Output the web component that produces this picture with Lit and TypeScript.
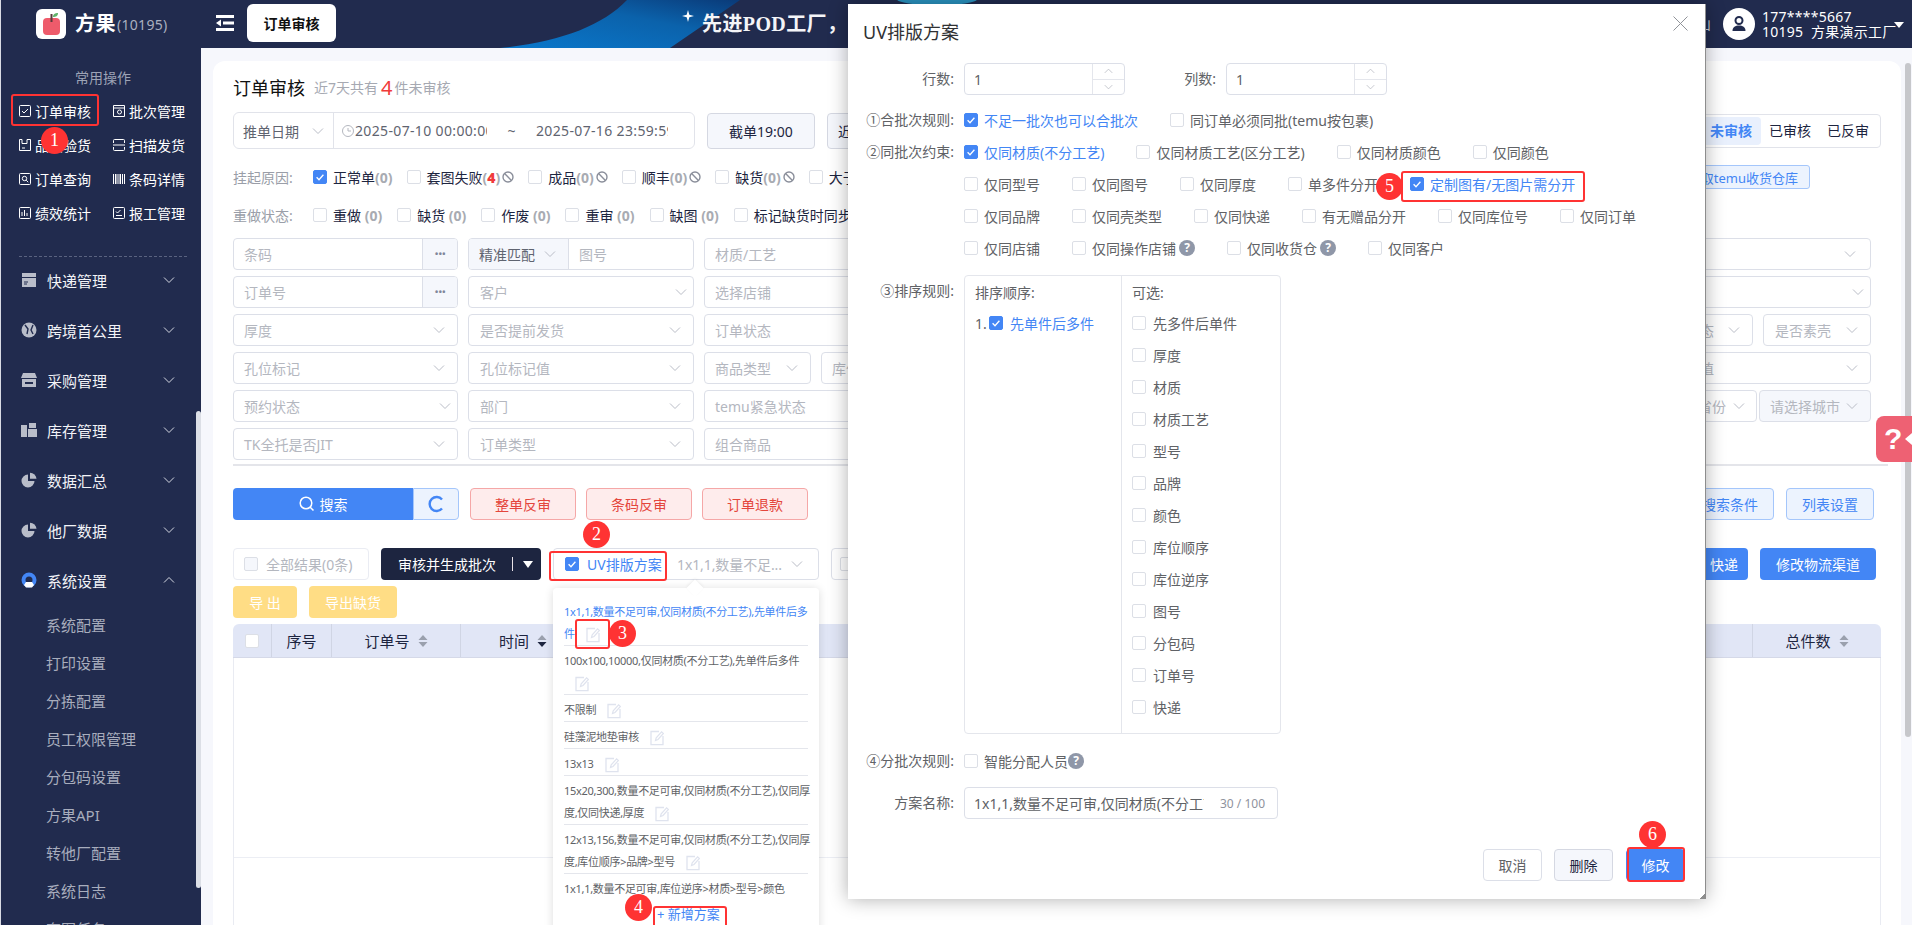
import { LitElement, html, css, svg } from "lit";
import { customElement } from "lit/decorators.js";

const check = html`<svg viewBox="0 0 14 14" width="14" height="14"><path d="M3.6 7.2l2.4 2.5 4.4-5" fill="none" stroke="#fff" stroke-width="1.3"/></svg>`;
const cb = (on = false) => html`<span class="cb ${on ? "on" : ""}">${on ? check : ""}</span>`;
const chev = (cls = "") => html`<svg class="chev ${cls}" viewBox="0 0 12 8" width="12" height="8"><path d="M1 1.5l5 5 5-5" fill="none" stroke="currentColor" stroke-width="1"/></svg>`;
const ban = html`<svg class="ban" viewBox="0 0 12 12" width="12" height="12"><circle cx="6" cy="6" r="5" fill="none" stroke="#8b8f9b" stroke-width="1.4"/><path d="M2.6 2.6l6.8 6.8" stroke="#8b8f9b" stroke-width="1.4"/></svg>`;
const q = html`<span class="q">?</span>`;
const edit = html`<svg class="edit" viewBox="0 0 14 16" width="14" height="16"><path d="M9 1.5H1v13.2h12V6" fill="none" stroke="#dfe3ee" stroke-width="1.3"/><path d="M5.5 10.5l.7-2.6 5.4-6 1.8 1.6-5.4 6z" fill="none" stroke="#dfe3ee" stroke-width="1.2"/></svg>`;
const sort = (down = false) => html`<svg class="sort" viewBox="0 0 10 14" width="10" height="14"><path d="M5 1l4.5 5H.5z" fill="#9aa0ad"/><path d="M5 13L.5 8h9z" fill="${down ? "#1d2540" : "#9aa0ad"}"/></svg>`;

const qi = (body: unknown) => html`<svg class="qi" viewBox="0 0 12 12" width="12" height="12" fill="none" stroke="#fff" stroke-width="1">${body}</svg>`;
const quick = [
  ["订单审核", qi(svg`<rect x=".5" y=".5" width="11" height="11" rx="1"/><path d="M3 6l2 2 4-4"/>`)],
  ["批次管理", qi(svg`<path d="M.5.5h11v11H.5z"/><path d="M.5 3h11"/><circle cx="6.5" cy="7" r="2"/>`)],
  ["品质验货", qi(svg`<path d="M3 .5H.5v11h11V.5H8v4H3z" /><path d="M3 9h3"/>`)],
  ["扫描发货", qi(svg`<path d="M.5 4V1.500q0-1 1-1h9q1 0 1 1V4M.5 8v2.500q0 1 1 1h9q1 0 1-1V8M0 6h12"/>`)],
  ["订单查询", qi(svg`<rect x=".5" y=".5" width="11" height="11" rx="1"/><circle cx="5.500" cy="5.500" r="2.200"/><path d="M7.200 7.200l2 2"/>`)],
  ["条码详情", qi(svg`<path d="M.5 1v10M2.500 1v10M4 1v10M6 1v10M7.500 1v10M9.500 1v10M11.500 1v10"/>`)],
  ["绩效统计", qi(svg`<rect x=".5" y=".5" width="11" height="11" rx="1"/><path d="M3 9V5M5.500 9V3M8 9V6"/>`)],
  ["报工管理", qi(svg`<rect x=".5" y=".5" width="11" height="11" rx="1"/><path d="M3 4.500l1.500 1.500 3-3M3 8.500h6"/>`)],
];
const mi = (body: unknown, color = "#b9bdc9") => html`<svg class="mi" viewBox="0 0 16 16" width="16" height="16" fill="${color}">${body}</svg>`;
const pie = svg`<path d="M7 2.500a6.500 6.500 0 1 0 6.500 6.500H7z"/><path d="M9 .8v6h6.500A6.500 6.500 0 0 0 9 .8z"/>`;
const menu = [
  ["快递管理", mi(svg`<path d="M1 1h14v4H1z"/><path d="M1 6h14v9H1z"/><path d="M3 10h4M3 12h3" stroke="#212b4e" stroke-width="1"/>`)],
  ["跨境首公里", mi(svg`<circle cx="8" cy="8" r="7.500"/><path d="M4 3l3 4-1 5M12 3l-2 5 2 4" stroke="#212b4e" stroke-width="1.400" fill="none"/>`)],
  ["采购管理", mi(svg`<path d="M2 1h12l2 5H0z"/><path d="M1 7h14v8H1z"/><path d="M4 10h8v2H4z" fill="#212b4e"/>`)],
  ["库存管理", mi(svg`<path d="M0 3h6v12H0zM7 7h9v8H7zM8 1h7v5H8z"/>`)],
  ["数据汇总", mi(pie)],
  ["他厂数据", mi(pie)],
];
const subs = ["系统配置", "打印设置", "分拣配置", "员工权限管理", "分包码设置", "方果API", "转他厂配置", "系统日志", "套图任务"];

type F = { t: string; w: number; cr?: number; pad?: number; dis?: boolean };
const field = (f: F) => html`<div class="field ${f.dis ? "dis" : ""}" style="width:${f.w}px;padding-left:${f.pad ?? 10}px;padding-right:${(f.cr ?? 18) - 6}px"><span class="ph">${f.t}</span>${chev()}</div>`;
const plain = (t: string, w: number) => html`<div class="field" style="width:${w}px"><span class="ph">${t}</span></div>`;
const more = (t: string) => html`<div class="field addon w1"><span class="ph grow">${t}</span><span class="dots">•••</span></div>`;

const formRows = [
  {
    left: html`${more("条码")}<div class="field prefix w2"><span class="pre"><span>精准匹配</span>${chev()}</span><span class="ph">图号</span></div>${plain("材质/工艺", 225)}`,
    right: [{ t: "", w: 200, cr: 20 }],
  },
  {
    left: html`${more("订单号")}${field({ t: "客户", w: 226, cr: 12, pad: 11 })}${plain("选择店铺", 225)}`,
    right: [{ t: "", w: 200, cr: 12 }],
  },
  {
    left: html`${field({ t: "厚度", w: 225 })}${field({ t: "是否提前发货", w: 226, pad: 11 })}${plain("订单状态", 225)}`,
    right: [{ t: "订单状态", w: 153, pad: 57 }, { t: "是否素壳", w: 108, pad: 11 }],
  },
  {
    left: html`${field({ t: "孔位标记", w: 225 })}${field({ t: "孔位标记值", w: 226, pad: 11 })}${field({ t: "商品类型", w: 107 })}${plain("库位", 110)}`,
    right: [{ t: "标记值", w: 260, pad: 60 }],
  },
  {
    left: html`${field({ t: "预约状态", w: 225, cr: 12 })}${field({ t: "部门", w: 226, pad: 11 })}${plain("temu紧急状态", 225)}`,
    right: [{ t: "选择省份", w: 160, pad: 72, cr: 17 }, { t: "请选择城市", w: 112, dis: true, cr: 18 }],
  },
  {
    left: html`${field({ t: "TK全托是否JIT", w: 225 })}${field({ t: "订单类型", w: 226, pad: 11 })}${plain("组合商品", 225)}`,
    right: [],
  },
];

const schemes = [
  ["1x1,1,数量不足可审,仅同材质(不分工艺),先单件后多", "件"],
  ["100x100,10000,仅同材质(不分工艺),先单件后多件", ""],
  ["不限制"],
  ["硅藻泥地垫审核"],
  ["13x13"],
  ["15x20,300,数量不足可审,仅同材质(不分工艺),仅同厚", "度,仅同快递,厚度"],
  ["12x13,156,数量不足可审,仅同材质(不分工艺),仅同厚", "度,库位顺序>品牌>型号"],
];

const optRows: [string, boolean, boolean?][][] = [
  [["仅同材质(不分工艺)", true], ["仅同材质工艺(区分工艺)", false], ["仅同材质颜色", false], ["仅同颜色", false]],
  [["仅同型号", false], ["仅同图号", false], ["仅同厚度", false], ["单多件分开", false], ["定制图有/无图片需分开", true]],
  [["仅同品牌", false], ["仅同壳类型", false], ["仅同快递", false], ["有无赠品分开", false], ["仅同库位号", false], ["仅同订单", false]],
  [["仅同店铺", false], ["仅同操作店铺", false, true], ["仅同收货仓", false, true], ["仅同客户", false]],
];
const sortOpts = ["先多件后单件", "厚度", "材质", "材质工艺", "型号", "品牌", "颜色", "库位顺序", "库位逆序", "图号", "分包码", "订单号", "快递"];

const stepper = html`<span class="stepper"><span>${chev("up")}</span><span>${chev()}</span></span>`;

@customElement("app-root")
export class AppRoot extends LitElement {
  static styles = css`
    :host { display: block; width: 1912px; height: 925px; position: relative; overflow: hidden; background: #f6f7fc;
      font-family: "Noto Sans", "Noto Sans CJK SC", sans-serif; font-size: 14px; color: #1d2540; }
    * { box-sizing: border-box; }
    svg { flex: none; display: block; }
    .app { display: flex; height: 925px; }

    .side { width: 201px; flex: none; background: #212b4e; border-left: 1px solid #d9dbe4; position: relative; height: 925px; overflow: hidden; color: #fff; }
    .logo { height: 48px; display: flex; align-items: center; padding-left: 35px; }
    .logo b { font-size: 20px; margin: 0 1px 0 9px; line-height: 24px; letter-spacing: .5px; }
    .logo span { color: #aab0c0; font-size: 14px; letter-spacing: .3px; }
    .sec { padding: 20px 0 0 74px; height: 46px; line-height: 20px; color: #9da3b6; }
    .qgrid { display: grid; grid-template-columns: 94px 94px; grid-auto-rows: 34px; padding-left: 18px; }
    .qgrid div { display: flex; align-items: center; gap: 4px; }
    .dash { margin: 26px 14px 0 18px; border-top: 1px dashed #5a6380; height: 0; }
    .menu { margin-top: -2px; }
    .mitem { height: 50px; display: flex; align-items: center; padding: 0 26px 0 20px; font-size: 15px; color: #f2f3f7; }
    .mitem .mi { margin-right: 10px; }
    .mitem .chev { margin-left: auto; color: #d5d8e2; }
    .chev.up { transform: rotate(180deg); }
    .subs { padding-top: 1px; }
    .sub { height: 38px; line-height: 38px; padding-left: 45px; font-size: 15px; color: #a8adbd; }
    .sbar { position: absolute; left: 195px; top: 411px; width: 5px; height: 477px; background: #dcdfe6; border-radius: 3px; }

    .main { flex: 1; min-width: 0; display: flex; flex-direction: column; }
    .top { height: 48px; flex: none; background: #212b4e; display: flex; position: relative; overflow: hidden; padding-left: 15px; }
    .burger { margin: 15px 13px 0 0; }
    .tab { width: 89px; height: 38px; margin-top: 4px; background: #fff; border-radius: 6px; font-weight: 700; color: #111; display: flex; align-items: center; justify-content: center; font-size: 14px; }
    .swoosh { position: absolute; left: 289px; top: 0; }
    .glow { position: absolute; left: 696px; top: -6px; width: 80px; height: 11px; border-radius: 50%; background: #2a93c0; }
    .star { position: absolute; left: 481px; top: 10px; }
    .slogan { position: absolute; left: 501px; top: 9px; font: 700 20px/30px "Liberation Serif", "Noto Sans CJK SC", serif; color: #f4f5f8; letter-spacing: .4px; white-space: nowrap; }
    .frag { position: absolute; left: 1496px; top: 15px; color: #c9ccd6; font-size: 14px; line-height: 18px; }
    .user { position: absolute; right: 0; top: 0; height: 48px; width: 212px; padding-left: 23px; display: flex; align-items: center; color: #fff; }
    .avatar { width: 32px; height: 32px; flex: none; background: #fff; border-radius: 50%; display: flex; align-items: center; justify-content: center; margin-right: 7px; }
    .uname { line-height: 15px; font-size: 14px; letter-spacing: .25px; white-space: nowrap; }
    .caret { position: absolute; right: 8px; top: 22px; width: 0; height: 0; border: 5px solid transparent; border-top: 6px solid #fff; border-bottom: 0; }

    .body { flex: 1; min-height: 0; padding: 13px 11px 0 12px; position: relative; }
    .pbar { position: absolute; right: 1px; top: 15px; width: 6px; height: 674px; background: #c6c7cb; border-radius: 3px; }
    .card { background: #fff; border-radius: 12px 12px 0 0; height: 100%; padding: 13px 20px 0; overflow: hidden; }
    .title { height: 26px; display: flex; align-items: center; margin-bottom: 12px; white-space: nowrap; }
    .title h1 { font-size: 18px; font-weight: 400; margin: 0 9px 0 0; color: #111; }
    .title span { color: #a6a9b2; }
    .title em { font-style: normal; color: #f03a3a; font-size: 20px; margin: 0 2px 0 3px; font-weight: 400; }

    .rowb { display: flex; align-items: center; justify-content: space-between; }
    .group { display: flex; align-items: center; }
    .r1 { height: 37px; }
    .datebox { width: 462px; height: 37px; border: 1px solid #e1e3ea; border-radius: 6px; display: flex; align-items: center; white-space: nowrap; overflow: hidden; }
    .datesel { width: 100px; height: 100%; border-right: 1px solid #e1e3ea; display: flex; align-items: center; justify-content: space-between; padding: 0 9px 0 9px; color: #5f6470; }
    .datesel .chev { color: #b9bcc6; }
    .clock { margin: 0 1px 0 8px; }
    .dt { width: 132px; overflow: hidden; color: #5f6470; letter-spacing: .35px; }
    .tilde { width: 49px; text-align: center; color: #5f6470; }
    .btn { height: 36px; border: 1px solid #d5d8e2; background: #f5f7fc; border-radius: 4px; display: flex; align-items: center; justify-content: center; white-space: nowrap; }
    .b1 { width: 108px; margin-left: 12px; }
    .b2 { width: 60px; margin-left: 12px; justify-content: flex-start; padding-left: 10px; }
    .seg { width: 184px; height: 34px; border: 1px solid #e1e3ea; border-radius: 4px; display: flex; align-items: center; padding: 0 3px; }
    .seg span { flex: none; width: 58px; height: 28px; line-height: 28px; text-align: center; }
    .seg .act { background: #e9f0fd; color: #4386f5; font-weight: 700; border-radius: 4px; width: 60px; }

    .chk { display: flex; align-items: center; height: 24px; white-space: nowrap; }
    .lab { color: #9a9ea8; width: 80px; flex: none; }
    .cb { width: 14px; height: 14px; flex: none; border: 1px solid #dcdfe6; border-radius: 2px; background: #fff; margin-right: 6px; display: block; }
    .cb svg { margin: -1px; }
    .cb.on { background: #4386f5; border-color: #4386f5; }
    .n { color: #a8abb2; font-weight: 700; }
    .n b { color: #f03a3a; }
    .ck { display: flex; align-items: center; margin-right: 14px; }
    .ban { margin: 0 0 0 2px; }
    .hang { margin-top: 16px; }
    .redo { margin-top: 14px; height: 24px; }
    .redo .ck { margin-right: 15px; }
    .temu { height: 24px; width: 120px; padding-right: 11px; border: 1px solid #a4c6fb; background: #ecf3fe; border-radius: 3px; color: #4386f5; font-size: 13px; display: flex; align-items: center; justify-content: flex-end; white-space: nowrap; margin-right: 71px; }

    .form { margin-top: 11px; display: flex; flex-direction: column; gap: 6px; }
    .frow { display: flex; justify-content: space-between; height: 32px; padding-right: 10px; }
    .fl, .fr { display: flex; height: 32px; }
    .fl { gap: 10px; }
    .fr { gap: 10px; }
    .fr.tight { gap: 2px; }
    .field { height: 32px; border: 1px solid #dcdfe8; border-radius: 4px; display: flex; align-items: center; justify-content: space-between; padding: 0 10px; flex: none; background: #fff; overflow: hidden; white-space: nowrap; }
    .field.dis { background: #f5f7fc; }
    .field .chev { color: #b9bcc6; }
    .ph { color: #b4b7bf; }
    .grow { flex: 1; padding-left: 0; }
    .w1 { width: 225px; }
    .w2 { width: 226px; }
    .addon { padding: 0 0 0 10px; }
    .dots { width: 35px; height: 100%; background: #f5f7fc; border-left: 1px solid #dcdfe8; color: #80869a; font-size: 11px; line-height: 30px; text-align: center; letter-spacing: -.5px; }
    .prefix { padding: 0; justify-content: flex-start; gap: 10px; }
    .pre { width: 100px; height: 100%; background: #f5f7fc; border-right: 1px solid #dcdfe8; display: flex; align-items: center; justify-content: space-between; padding: 0 12px 0 10px; color: #5f6470; }
    .rule { height: 2px; background: #e4e5ea; margin-top: 4px; margin-right: -20px; width: 1655px; }

    .acts { margin-top: 22px; height: 32px; }
    .search { display: flex; width: 226px; height: 32px; margin-right: 1px; }
    .s1 { width: 180px; background: #4386f5; color: #fff; border-radius: 4px 0 0 4px; display: flex; align-items: center; justify-content: center; gap: 5px; }
    .s2 { width: 46px; background: #ecf3fe; border: 1px solid #a4c6fb; border-radius: 0 4px 4px 0; display: flex; align-items: center; justify-content: center; }
    .rbtn { height: 32px; width: 106px; margin-left: 10px; background: #feecec; border: 1px solid #f5a7a7; border-radius: 4px; color: #e4463c; display: flex; align-items: center; justify-content: center; }
    .lbtn { height: 32px; width: 88px; background: #ecf3fe; border: 1px solid #a4c6fb; border-radius: 4px; color: #4386f5; display: flex; align-items: center; justify-content: center; white-space: nowrap; }
    .lbtn2 { margin: 0 7px 0 12px; }
    .bluebtn { height: 32px; background: #4386f5; color: #fff; border-radius: 4px; display: flex; align-items: center; justify-content: center; white-space: nowrap; }
    .bb1 { width: 100px; margin-right: 12px; justify-content: flex-end; padding-right: 10px; }
    .bb2 { width: 116px; }

    .bar { margin-top: 28px; height: 32px; padding-right: 5px; }
    .all { width: 136px; height: 32px; border: 1px solid #eaecf3; border-radius: 4px; display: flex; align-items: center; padding-left: 10px; color: #b4b7bf; white-space: nowrap; }
    .all .cb { background: #f5f7fc; margin-right: 8px; }
    .audit { width: 160px; height: 32px; margin-left: 12px; background: #1d2540; color: #fff; border-radius: 4px; display: flex; align-items: center; padding-left: 17px; position: relative; white-space: nowrap; }
    .audit i { position: absolute; left: 131px; top: 9px; height: 14px; width: 1px; background: #e9e3e8; }
    .audit u { position: absolute; left: 142px; top: 13px; border: 5px solid transparent; border-top: 7px solid #fff; border-bottom: 0; }
    .uv { width: 266px; height: 32px; margin-left: 12px; border: 1px solid #dcdfe8; border-radius: 4px; display: flex; align-items: center; padding-left: 11px; white-space: nowrap; }
    .uv .cb { margin-right: 8px; }
    .uv .lbl { color: #4386f5; width: 90px; flex: none; }
    .uv .ph { width: 108px; flex: none; letter-spacing: -.1px; }
    .uv .chev { color: #b9bcc6; margin-left: 6px; }
    .tail { width: 80px; height: 32px; margin-left: 12px; border: 1px solid #dcdfe8; border-radius: 4px; padding: 8px; }

    .exp { margin-top: 6px; display: flex; gap: 12px; }
    .ybtn { height: 32px; background: #ffdd85; color: #fff; border-radius: 4px; display: flex; align-items: center; justify-content: center; white-space: nowrap; }
    .y1 { width: 64px; }
    .y2 { width: 88px; }
    .thead { margin-top: 6px; height: 34px; background: #e1e6f6; border-bottom: 1px solid #d5d9e8; border-radius: 6px 6px 0 0; display: flex; font-size: 15px; margin-right: 0; }
    .th { height: 100%; border-right: 1px solid #d0d5e4; display: flex; align-items: center; justify-content: center; gap: 8px; flex: none; color: #1d2540; }
    .th .cb { margin: 0; }
    .c1 { width: 39px; }
    .c2 { width: 60px; }
    .c3 { width: 129px; }
    .th.fill { flex: 1; border: 0; justify-content: flex-start; padding-left: 38px; }
    .th.last { width: 129px; border: 0; border-left: 1px solid #d0d5e4; }
    .tbody { border: 1px solid #e9ebf2; border-top: 0; height: 400px; }
    .tline { height: 200px; border-bottom: 1px solid #eceef4; }

    .pop { position: absolute; left: 553px; top: 588px; width: 266px; height: 380px; background: #fff; border-radius: 4px; box-shadow: 0 1px 10px rgba(0,0,0,.14); padding: 9px 11px 0; font-size: 11px; color: #606266; letter-spacing: -.3px; }
    .pop::before { content: ""; position: absolute; left: 136px; top: -6px; width: 12px; height: 12px; background: #fff; transform: rotate(45deg); box-shadow: -1px -1px 3px rgba(0,0,0,.06); }
    .sch { padding: 4px 0 0; line-height: 22px; border-bottom: 1px solid #e4e6ec; white-space: nowrap; position: relative; }
    .sch .edit { display: inline-block; vertical-align: middle; margin: -4px 0 -4px 11px; }
    .sch.act { color: #4386f5; }
    .sch.end { border: 0; }
    .addnew { color: #4386f5; font-size: 13px; padding-left: 93px; margin-top: 5px; line-height: 18px; white-space: nowrap; letter-spacing: 0; }

    .modal { position: absolute; left: 848px; top: 4px; width: 858px; height: 895px; background: #fff; border-right: 1px solid #8d8d8d; box-shadow: 0 0 18px rgba(0,0,0,.32); color: #606266; }
    .modal::after { content: ""; position: absolute; right: 0; bottom: 0; width: 6px; height: 6px; background: linear-gradient(135deg, transparent 50%, #8d8d8d 50%); }
    .mt { height: 59px; padding: 16px 0 0 15px; font-size: 18px; line-height: 24px; color: #303133; position: relative; }
    .close { position: absolute; right: 17px; top: 12px; }
    .mr { display: flex; }
    .mrs { margin-top: 11px; }
    .mrn { margin-top: 10px; }
    .ml { width: 106px; flex: none; text-align: right; line-height: 32px; white-space: nowrap; margin-right: 10px; }
    .num { width: 161px; height: 32px; border: 1px solid #dcdfe8; border-radius: 4px; display: flex; align-items: center; padding-left: 9px; position: relative; overflow: hidden; color: #606266; }
    .stepper { position: absolute; right: 0; top: 0; width: 32px; height: 100%; border-left: 1px solid #e4e6ec; display: flex; flex-direction: column; }
    .stepper span { flex: 1; display: flex; align-items: center; justify-content: center; color: #b4b7bf; }
    .stepper span + span { border-top: 1px solid #e4e6ec; }
    .stepper svg { width: 9px; }
    .ml2 { width: 74px; margin-right: 10px; margin-left: 17px; }
    .opts { margin-top: 9px; }
    .optr { display: flex; height: 32px; align-items: center; gap: 32px; white-space: nowrap; }
    .o { display: flex; align-items: center; }
    .o.on { color: #4386f5; }
    .q { width: 16px; height: 16px; border-radius: 50%; background: #8f97a8; color: #fff; font-size: 12px; font-weight: 700; line-height: 16px; text-align: center; margin-left: 3px; flex: none; }
    .tightq .q { margin-left: 0; }
    .sortbox { width: 317px; height: 459px; border: 1px solid #e4e6ec; border-radius: 4px; display: flex; }
    .sl { width: 157px; border-right: 1px solid #e4e6ec; padding-left: 10px; }
    .sr { flex: 1; padding-left: 10px; }
    .sh { height: 34px; line-height: 33px; }
    .si { display: flex; align-items: center; height: 32px; margin-top: 0; white-space: nowrap; }
    .si .cb { margin-right: 7px; }
    .si .idx { width: 14px; flex: none; color: #606266; }
    .si.on { color: #4386f5; }
    .first { margin-top: -3px; }
    .namebox { width: 314px; height: 32px; border: 1px solid #dcdfe8; border-radius: 4px; display: flex; align-items: center; padding-left: 9px; white-space: nowrap; }
    .namebox span { width: 230px; overflow: hidden; flex: none; }
    .namebox small { color: #8f939d; font-size: 12px; margin-left: 16px; }
    .foot { display: flex; justify-content: flex-end; gap: 12px; padding-right: 20px; margin-top: 30px; }
    .foot div { width: 59px; height: 32px; border-radius: 4px; display: flex; align-items: center; justify-content: center; border: 1px solid #dcdfe8; background: #fff; }
    .foot .d { background: #f5f7fc; border-color: #d5d8e2; color: #1d2540; }
    .foot .p { background: #4386f5; border-color: #4386f5; color: #fff; margin-left: 1px; }

    .help { position: absolute; left: 1876px; top: 416px; width: 36px; height: 46px; background: #ee6173; border-radius: 8px 0 0 8px; color: #fff; font: 700 30px/46px "Liberation Sans", sans-serif; padding-left: 8px; }
    .help::after { content: ""; position: absolute; right: 0; top: 17px; border: 6px solid transparent; border-right: 7px solid #fff; border-left: 0; }

    .rb { position: absolute; border: 2px solid #f33; border-radius: 3px; pointer-events: none; }
    .rb1 { left: 11px; top: 94px; width: 88px; height: 32px; }
    .rb2 { left: 549px; top: 551px; width: 118px; height: 30px; }
    .rb3 { left: 575px; top: 619px; width: 35px; height: 30px; }
    .rb4 { left: 653px; top: 906px; width: 74px; height: 24px; }
    .rb5 { left: 1401px; top: 171px; width: 184px; height: 31px; }
    .rb6 { left: 1627px; top: 847px; width: 58px; height: 35px; }
    .nb { position: absolute; width: 27px; height: 27px; border-radius: 50%; background: #f33; color: #fff; font: 18px/27px "Liberation Serif", serif; text-align: center; }
    .n1 { left: 41px; top: 127px; }
    .n2 { left: 583px; top: 521px; }
    .n3 { left: 609px; top: 620px; }
    .n4 { left: 625px; top: 894px; }
    .n5 { left: 1376px; top: 173px; }
    .n6 { left: 1639px; top: 821px; }
  `;

  render() {
    return html`
      <div class="app">
        <aside class="side">
          <div class="logo">
            <svg viewBox="0 0 30 30" width="30" height="30"><rect width="30" height="30" rx="6" fill="#fff"/><rect x="7" y="9" width="17" height="17" rx="4" fill="#ee5b6b"/><rect x="14.500" y="5" width="2" height="8" fill="#5b3b3b"/><path d="M17 8c0-3 2-4 5-4 0 3-2 4-5 4z" fill="#5fb36a"/></svg>
            <b>方果</b><span>(10195)</span>
          </div>
          <div class="sec">常用操作</div>
          <div class="qgrid">${quick.map(([t, i]) => html`<div>${i}<span>${t}</span></div>`)}</div>
          <div class="dash"></div>
          <div class="menu">
            ${menu.map(([t, i]) => html`<div class="mitem">${i}<span>${t}</span>${chev()}</div>`)}
            <div class="mitem">
              ${mi(svg`<circle cx="8" cy="8" r="7.500" fill="#4386f5"/><circle cx="8" cy="8" r="3.500" fill="#212b4e"/><path d="M3 13l2-3h6l2 3-2 2.500H5z" fill="#fff"/>`)}
              <span>系统设置</span>${chev("up")}
            </div>
            <div class="subs">${subs.map((s) => html`<div class="sub">${s}</div>`)}</div>
          </div>
          <div class="sbar"></div>
        </aside>

        <div class="main">
          <header class="top">
            <svg class="burger" viewBox="0 0 18 16" width="18" height="16"><path d="M0 1.500h18M7 8h11M0 14.500h18" stroke="#fff" stroke-width="3"/><path d="M5 4.500v7L0 8z" fill="#fff"/></svg>
            <div class="tab">订单审核</div>
            <svg class="swoosh" viewBox="0 0 260 48" width="260" height="48"><defs><linearGradient id="sw" x1="0" y1="1" x2="1" y2="0"><stop offset="0" stop-color="#0a78cc"/><stop offset=".6" stop-color="#0b62ab"/><stop offset="1" stop-color="#0a3a78"/></linearGradient></defs><path d="M10 48C70 42 112 26 137 0H250L180 48z" fill="url(#sw)"/></svg>
            <div class="glow"></div>
            <svg class="star" viewBox="0 0 12 12" width="12" height="12"><path d="M6 0l1.300 4.700L12 6 7.300 7.300 6 12 4.700 7.300 0 6l4.700-1.300z" fill="#fff"/></svg>
            <div class="slogan">先进POD工厂，</div>
            <div class="frag">山</div>
            <div class="user">
              <div class="avatar"><svg viewBox="0 0 18 18" width="18" height="18"><circle cx="9" cy="5.500" r="3.500" fill="none" stroke="#212b4e" stroke-width="2"/><path d="M2.500 16c0-4 3-5.500 6.500-5.500s6.500 1.500 6.500 5.500z" fill="#212b4e"/></svg></div>
              <div class="uname">177****5667<br />10195&nbsp; 方果演示工厂</div>
              <div class="caret"></div>
            </div>
          </header>

          <div class="body">
            <main class="card">
              <div class="title"><h1>订单审核</h1><span>近7天共有</span><em>4</em><span>件未审核</span></div>
              <div class="rowb r1">
                <div class="group">
                  <div class="datebox">
                    <div class="datesel"><span>推单日期</span>${chev()}</div>
                    <svg class="clock" viewBox="0 0 12 12" width="12" height="12"><circle cx="6" cy="6" r="5.500" fill="none" stroke="#b4b7bf"/><path d="M6 3v3h3" fill="none" stroke="#b4b7bf"/></svg>
                    <span class="dt">2025-07-10 00:00:00</span><span class="tilde">~</span><span class="dt">2025-07-16 23:59:59</span>
                  </div>
                  <div class="btn b1">截单19:00</div>
                  <div class="btn b2">近7天</div>
                </div>
                <div class="seg"><span class="act">未审核</span><span>已审核</span><span>已反审</span></div>
              </div>
              <div class="rowb chk hang">
                <div class="group">
                  <span class="lab">挂起原因:</span>
                  <span class="ck">${cb(true)}<span>正常单<span class="n">(0)</span></span></span>
                  <span class="ck">${cb()}<span>套图失败<span class="n">(<b>4</b>)</span></span>${ban}</span>
                  <span class="ck">${cb()}<span>成品<span class="n">(0)</span></span>${ban}</span>
                  <span class="ck">${cb()}<span>顺丰<span class="n">(0)</span></span>${ban}</span>
                  <span class="ck">${cb()}<span>缺货<span class="n">(0)</span></span>${ban}</span>
                  <span class="ck">${cb()}<span>大于</span></span>
                </div>
                <div class="temu">获取temu收货仓库</div>
              </div>
              <div class="chk redo">
                <span class="lab">重做状态:</span>
                ${["重做", "缺货", "作废", "重审", "缺图"].map((t) => html`<span class="ck">${cb()}<span>${t} <span class="n">(0)</span></span></span>`)}
                <span class="ck">${cb()}<span>标记缺货时同步</span></span>
              </div>
              <div class="form">
                ${formRows.map((r, i) => html`<div class="frow"><div class="fl">${r.left}</div><div class="fr ${i === 4 ? "tight" : ""}">${r.right.map((f) => field(f))}</div></div>`)}
              </div>
              <div class="rule"></div>
              <div class="rowb acts">
                <div class="group">
                  <div class="search">
                    <div class="s1"><svg viewBox="0 0 16 16" width="16" height="16"><circle cx="7" cy="7" r="5.800" fill="none" stroke="#fff" stroke-width="1.500"/><path d="M11 11l3.500 3.500" stroke="#fff" stroke-width="1.500"/></svg><span>搜索</span></div>
                    <div class="s2"><svg viewBox="0 0 16 18" width="16" height="18"><path d="M14 4.500A7 7 0 1 0 14 13.500" fill="none" stroke="#4386f5" stroke-width="2.400"/></svg></div>
                  </div>
                  <div class="rbtn">整单反审</div><div class="rbtn">条码反审</div><div class="rbtn">订单退款</div>
                </div>
                <div class="group"><div class="lbtn">搜索条件</div><div class="lbtn lbtn2">列表设置</div></div>
              </div>
              <div class="rowb bar">
                <div class="group">
                  <div class="all">${cb()}<span>全部结果(0条)</span></div>
                  <div class="audit">审核并生成批次<i></i><u></u></div>
                  <div class="uv">${cb(true)}<span class="lbl">UV排版方案</span><span class="ph">1x1,1,数量不足...</span>${chev()}</div>
                  <div class="tail">${cb()}</div>
                </div>
                <div class="group">
                  <div class="bluebtn bb1">快递</div>
                  <div class="bluebtn bb2">修改物流渠道</div>
                </div>
              </div>
              <div class="exp"><div class="ybtn y1">导 出</div><div class="ybtn y2">导出缺货</div></div>
              <div class="thead">
                <div class="th c1">${cb()}</div>
                <div class="th c2">序号</div>
                <div class="th c3">订单号${sort()}</div>
                <div class="th fill">时间${sort(true)}</div>
                <div class="th last">总件数${sort()}</div>
              </div>
              <div class="tbody"><div class="tline"></div></div>
            </main>
            <div class="pbar"></div>
          </div>
        </div>
      </div>

      <div class="pop">
        ${schemes.map((l, i) => html`<div class="sch ${i === 0 ? "act" : ""}">${l[0]}${l.length > 1 ? html`<br />${l[1]}` : ""}${edit}</div>`)}
        <div class="sch end">1x1,1,数量不足可审,库位逆序>材质>型号>颜色</div>
        <div class="addnew">+ 新增方案</div>
      </div>

      <section class="modal">
        <div class="mt">UV排版方案
          <svg class="close" viewBox="0 0 15 15" width="15" height="15"><path d="M.5.5l14 14M14.500.5l-14 14" stroke="#909399" stroke-width="1"/></svg>
        </div>
        <div class="mr">
          <span class="ml">行数:</span><div class="num">1${stepper}</div>
          <span class="ml ml2">列数:</span><div class="num">1${stepper}</div>
        </div>
        <div class="mr opts">
          <span class="ml">①合批次规则:</span>
          <div class="optr">
            <span class="o on">${cb(true)}不足一批次也可以合批次</span>
            <span class="o">${cb()}同订单必须同批(temu按包裹)</span>
          </div>
        </div>
        <div class="mr">
          <span class="ml">②同批次约束:</span>
          <div>
            ${optRows.map((r) => html`<div class="optr">${r.map(([t, on, h]) => html`<span class="o ${on ? "on" : ""}">${cb(on)}${t}${h ? q : ""}</span>`)}</div>`)}
          </div>
        </div>
        <div class="mr mrs">
          <span class="ml">③排序规则:</span>
          <div class="sortbox">
            <div class="sl">
              <div class="sh">排序顺序:</div>
              <div class="si on first"><span class="idx">1.</span>${cb(true)}先单件后多件</div>
            </div>
            <div class="sr">
              <div class="sh">可选:</div>
              ${sortOpts.map((s, i) => html`<div class="si ${i === 0 ? "first" : ""}">${cb()}${s}</div>`)}
            </div>
          </div>
        </div>
        <div class="mr mrs">
          <span class="ml">④分批次规则:</span>
          <div class="optr"><span class="o tightq">${cb()}智能分配人员${q}</span></div>
        </div>
        <div class="mr mrn">
          <span class="ml">方案名称:</span>
          <div class="namebox"><span>1x1,1,数量不足可审,仅同材质(不分工艺)</span><small>30 / 100</small></div>
        </div>
        <div class="foot"><div>取消</div><div class="d">删除</div><div class="p">修改</div></div>
      </section>

      <div class="help">?</div>

      <div class="rb rb1"></div><div class="rb rb2"></div><div class="rb rb3"></div><div class="rb rb4"></div><div class="rb rb5"></div><div class="rb rb6"></div>
      <div class="nb n1">1</div><div class="nb n2">2</div><div class="nb n3">3</div><div class="nb n4">4</div><div class="nb n5">5</div><div class="nb n6">6</div>
    `;
  }
}
